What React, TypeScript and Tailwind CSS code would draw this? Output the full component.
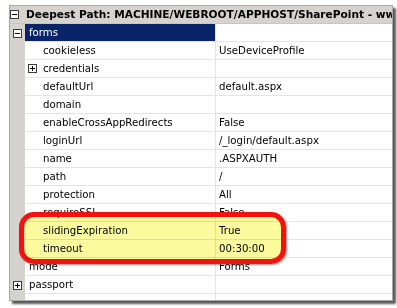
type Row = {
  name: string;
  value?: string;
  level?: number;
  toggle?: 'plus' | 'minus';
  selected?: boolean;
};

const rows: Row[] = [
  { name: 'forms', level: 0, toggle: 'minus', selected: true },
  { name: 'cookieless', value: 'UseDeviceProfile', level: 1 },
  { name: 'credentials', level: 1, toggle: 'plus' },
  { name: 'defaultUrl', value: 'default.aspx', level: 1 },
  { name: 'domain', level: 1 },
  { name: 'enableCrossAppRedirects', value: 'False', level: 1 },
  { name: 'loginUrl', value: '/_login/default.aspx', level: 1 },
  { name: 'name', value: '.ASPXAUTH', level: 1 },
  { name: 'path', value: '/', level: 1 },
  { name: 'protection', value: 'All', level: 1 },
  { name: 'requireSSL', value: 'False', level: 1 },
  { name: 'slidingExpiration', value: 'True', level: 1 },
  { name: 'timeout', value: '00:30:00', level: 1 },
  { name: 'mode', value: 'Forms', level: 0 },
  { name: 'passport', level: 0, toggle: 'plus' },
];

function ToggleBox({ kind }: { kind: 'plus' | 'minus' }) {
  return (
    <div className="relative w-[9px] h-[9px] border border-[#3c3c3c] bg-white shrink-0">
      <div className="absolute left-[1px] top-[3px] w-[5px] h-[1px] bg-black" />
      {kind === 'plus' && <div className="absolute left-[3px] top-[1px] w-[1px] h-[5px] bg-black" />}
    </div>
  );
}

export default function App() {
  return (
    <div className="w-[397px] h-[308px] bg-white pt-[5px] pl-[9px] font-['DejaVu_Sans',sans-serif] text-[10.2px] text-black">
      <div className="relative w-[384px] h-[296px] bg-white border border-[#a9a8a4] shadow-[3px_3px_2px_rgba(0,0,0,0.65)] overflow-hidden">
        {/* header */}
        <div className="flex items-center h-[18px] bg-[#d6d3ce] border-b border-[#c9c6c0]">
          <div className="w-[15px] flex justify-end pr-[3px]">
            <ToggleBox kind="minus" />
          </div>
          <div className="pl-[4px] font-bold text-[10.6px] whitespace-nowrap">
            Deepest Path: MACHINE/WEBROOT/APPHOST/SharePoint - www
          </div>
        </div>

        {/* property rows */}
        {rows.map((r) => (
          <div key={r.name} className="flex h-[18px]">
            <div className="w-[15px] bg-[#d6d3ce] flex items-center justify-end pr-[3px] shrink-0">
              {r.level === 0 && r.toggle && <ToggleBox kind={r.toggle} />}
            </div>
            <div
              className={`w-[191px] shrink-0 flex items-center border-r border-b border-[#e6e4e0] ${
                r.selected ? 'bg-[#0a246a] text-white' : ''
              } ${r.level === 1 ? 'pl-[3px]' : 'pl-[4px]'}`}
            >
              {r.level === 1 && (
                <div className="w-[15px] shrink-0 flex items-center">
                  {r.toggle && <ToggleBox kind={r.toggle} />}
                </div>
              )}
              <span className="whitespace-nowrap">{r.name}</span>
            </div>
            <div className="flex-1 flex items-center pl-[3px] border-b border-[#e6e4e0] whitespace-nowrap">
              {r.value}
            </div>
          </div>
        ))}
        <div className="flex h-[10px]">
          <div className="w-[15px] bg-[#d6d3ce]" />
          <div className="w-[191px] border-r border-[#e6e4e0]" />
        </div>

        {/* highlight annotation */}
        <div className="absolute left-[9px] top-[206px] w-[267px] h-[52px] rounded-[15px] bg-[#fbfa9c] mix-blend-multiply" />
        <div className="absolute left-[9px] top-[206px] w-[267px] h-[52px] rounded-[15px] border-[5px] border-[#f21212] shadow-[1px_1px_2px_rgba(90,0,0,0.5)]" />
      </div>
    </div>
  );
}
